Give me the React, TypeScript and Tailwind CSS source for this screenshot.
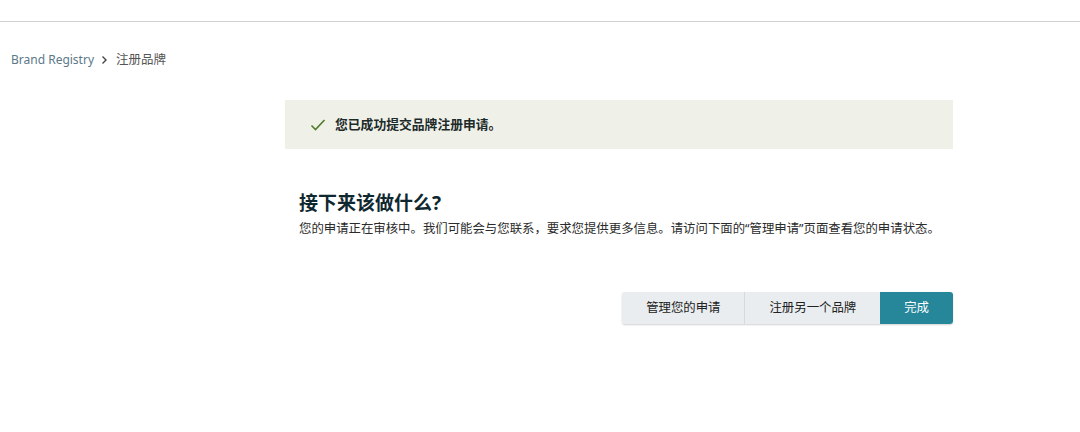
import React from "react";

const font = {
  fontFamily: '"Noto Sans", "Noto Sans CJK SC", sans-serif',
};

const App = () => {
  return (
    <main className="min-h-screen w-[1080px] h-[432px] bg-white text-[#111]" style={font}>
      {/* Top bar */}
      <div className="h-[22px] border-b border-[#d0d0d0]"></div>

      {/* Breadcrumb */}
      <nav className="flex items-center h-[20px] mt-[28px] pl-[11px] text-[12px]">
        <span className="text-[#5b7889]">Brand Registry</span>
        <svg className="ml-[5px] mr-[7px]" width="10" height="10" viewBox="0 0 10 10" fill="none">
          <path d="M3.5 1.5 L7 5 L3.5 8.5" stroke="#444" strokeWidth="1.4" />
        </svg>
        <span className="text-[#555] text-[12.5px]">注册品牌</span>
      </nav>

      {/* Content */}
      <div className="ml-[285px] w-[668px] mt-[30px]">
        <div className="flex items-center h-[49px] bg-[#eff1e9] pl-[25px]">
          <svg width="16" height="14" viewBox="0 0 16 14" fill="none">
            <path d="M1.5 7.5 L5.5 11.5 L14.5 2" stroke="#4f7a2a" strokeWidth="1.6" />
          </svg>
          <span className="ml-[9px] text-[12.8px] font-bold text-[#1d2a2a]">您已成功提交品牌注册申请。</span>
        </div>

        <div className="pl-[14px] mt-[41px]">
          <h2 className="text-[19px] leading-[26px] font-bold text-[#0f2830]">接下来该做什么?</h2>
          <p className="text-[12.4px] leading-[16px] mt-[5px] text-[#2b2b2b]">
            您的申请正在审核中。我们可能会与您联系，要求您提供更多信息。请访问下面的“管理申请”页面查看您的申请状态。
          </p>
        </div>

        <div className="flex justify-end mt-[55px]">
          <div className="flex rounded-[3px] shadow-[0_1px_2px_rgba(0,0,0,0.18)] overflow-hidden">
            <button className="h-[32px] px-[24px] bg-[#e9edef] text-[12.4px] text-[#222] border-r border-[#d6dadc]">
              管理您的申请
            </button>
            <button className="h-[32px] px-[24px] bg-[#e9edef] text-[12.4px] text-[#222]">
              注册另一个品牌
            </button>
            <button className="h-[32px] px-[24px] bg-[#26879a] text-[12.4px] text-white">
              完成
            </button>
          </div>
        </div>
      </div>
    </main>
  );
};

export default App;
